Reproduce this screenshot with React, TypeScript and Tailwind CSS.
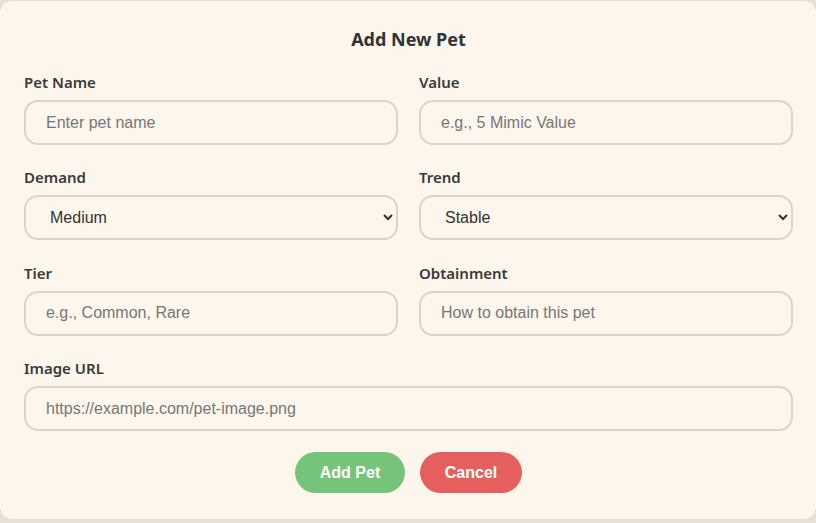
import { useState } from 'react';

const labelCls =
  'block mb-2 text-[15px] leading-5 font-semibold text-[#3a3a3a] [font-family:"Noto_Sans",sans-serif]';
const fieldCls =
  'w-full h-[45px] rounded-[14px] border-2 border-[#ddd3c6] bg-[#fdf6ec] px-5 text-[16px] text-[#333] placeholder:text-[#777] outline-none [font-family:"Liberation_Sans",Arial,sans-serif]';

export default function App() {
  const [demand, setDemand] = useState('Medium');
  const [trend, setTrend] = useState('Stable');

  return (
    <div className="min-h-[523px] bg-[#e8e0d3] pt-px pb-1">
      <div className="h-[518px] rounded-xl bg-[#fdf6ec] pl-6 pr-[23px] pt-[25px]">
        <h2 className='text-center text-[18px] leading-[26px] font-bold text-[#333] [font-family:"Noto_Sans",sans-serif]'>
          Add New Pet
        </h2>

        <div className="mt-[20px] grid grid-cols-2 gap-x-[21px] gap-y-[22.4px]">
          <div>
            <label className={labelCls}>Pet Name</label>
            <input className={fieldCls} placeholder="Enter pet name" />
          </div>
          <div>
            <label className={labelCls}>Value</label>
            <input className={fieldCls} placeholder="e.g., 5 Mimic Value" />
          </div>
          <div>
            <label className={labelCls}>Demand</label>
            <select
              className={fieldCls + ' pr-2'}
              value={demand}
              onChange={(e) => setDemand(e.target.value)}
            >
              <option>Low</option>
              <option>Medium</option>
              <option>High</option>
            </select>
          </div>
          <div>
            <label className={labelCls}>Trend</label>
            <select
              className={fieldCls + ' pr-2'}
              value={trend}
              onChange={(e) => setTrend(e.target.value)}
            >
              <option>Rising</option>
              <option>Stable</option>
              <option>Falling</option>
            </select>
          </div>
          <div>
            <label className={labelCls}>Tier</label>
            <input className={fieldCls} placeholder="e.g., Common, Rare" />
          </div>
          <div>
            <label className={labelCls}>Obtainment</label>
            <input className={fieldCls} placeholder="How to obtain this pet" />
          </div>
          <div className="col-span-2">
            <label className={labelCls}>Image URL</label>
            <input className={fieldCls} placeholder="https://example.com/pet-image.png" />
          </div>
        </div>

        <div className='mt-[21px] flex justify-center gap-[15px] [font-family:"Liberation_Sans",Arial,sans-serif]'>
          <button className="h-[41px] w-[110px] rounded-full bg-[#76c479] text-[16px] font-bold text-white">
            Add Pet
          </button>
          <button className="h-[41px] w-[102px] rounded-full bg-[#e65f5f] text-[16px] font-bold text-white">
            Cancel
          </button>
        </div>
      </div>
    </div>
  );
}
